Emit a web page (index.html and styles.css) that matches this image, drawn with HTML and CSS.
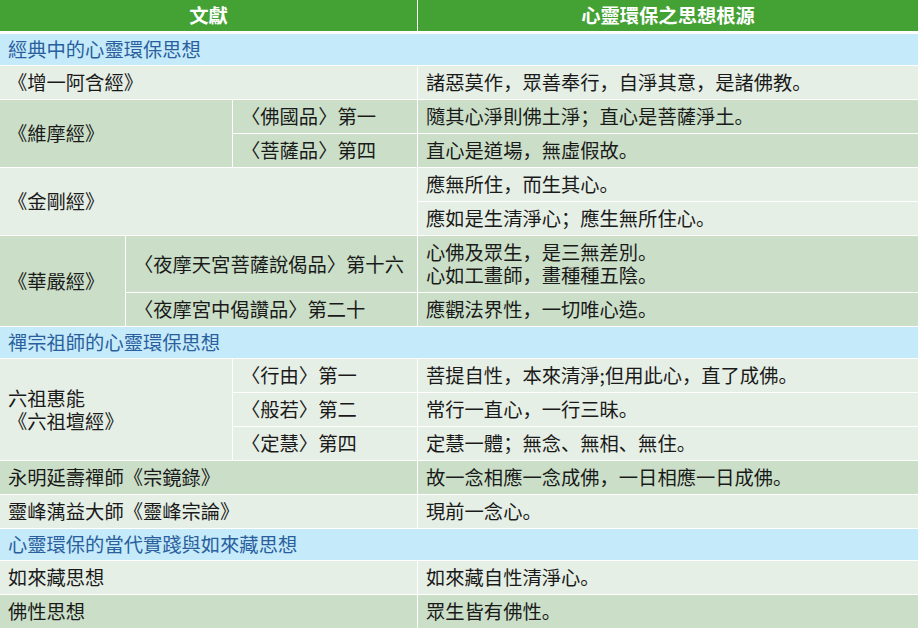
FILE: index.html
```html
<!DOCTYPE html>
<html lang="zh-Hant">
<head>
<meta charset="utf-8">
<title>心靈環保之思想根源</title>
<link rel="stylesheet" href="styles.css">
</head>
<body>
<table class="tbl">
  <colgroup>
    <col class="c1"><col class="c2"><col class="c3"><col class="c4">
  </colgroup>
  <thead>
    <tr class="head">
      <th colspan="3">文獻</th>
      <th class="last">心靈環保之思想根源</th>
    </tr>
  </thead>
  <tbody>
    <tr class="sec"><td colspan="4" class="last">經典中的心靈環保思想</td></tr>
    <tr class="lt"><td colspan="3">《增一阿含經》</td><td class="last">諸惡莫作<span class="pn" lang="zh-Hans">，</span>眾善奉行<span class="pn" lang="zh-Hans">，</span>自淨其意<span class="pn" lang="zh-Hans">，</span>是諸佛教<span class="pn" lang="zh-Hans">。</span></td></tr>
    <tr class="dk"><td colspan="2" rowspan="2">《維摩經》</td><td><span class="pn" lang="zh-Hans">〈</span>佛國品<span class="pn" lang="zh-Hans">〉</span>第一</td><td class="last">隨其心淨則佛土淨<span class="pn" lang="zh-Hans">；</span>直心是菩薩淨土<span class="pn" lang="zh-Hans">。</span></td></tr>
    <tr class="dk"><td><span class="pn" lang="zh-Hans">〈</span>菩薩品<span class="pn" lang="zh-Hans">〉</span>第四</td><td class="last">直心是道場<span class="pn" lang="zh-Hans">，</span>無虛假故<span class="pn" lang="zh-Hans">。</span></td></tr>
    <tr class="lt"><td colspan="3" rowspan="2">《金剛經》</td><td class="last">應無所住<span class="pn" lang="zh-Hans">，</span>而生其心<span class="pn" lang="zh-Hans">。</span></td></tr>
    <tr class="lt"><td class="last">應如是生清淨心<span class="pn" lang="zh-Hans">；</span>應生無所住心<span class="pn" lang="zh-Hans">。</span></td></tr>
    <tr class="dk"><td rowspan="2">《華嚴經》</td><td colspan="2"><span class="pn" lang="zh-Hans">〈</span>夜摩天宮菩薩說偈品<span class="pn" lang="zh-Hans">〉</span>第十六</td><td class="last">心佛及眾生<span class="pn" lang="zh-Hans">，</span>是三無差別<span class="pn" lang="zh-Hans">。</span><br>心如工畫師<span class="pn" lang="zh-Hans">，</span>畫種種五陰<span class="pn" lang="zh-Hans">。</span></td></tr>
    <tr class="dk"><td colspan="2"><span class="pn" lang="zh-Hans">〈</span>夜摩宮中偈讚品<span class="pn" lang="zh-Hans">〉</span>第二十</td><td class="last">應觀法界性<span class="pn" lang="zh-Hans">，</span>一切唯心造<span class="pn" lang="zh-Hans">。</span></td></tr>
    <tr class="sec"><td colspan="4" class="last">禪宗祖師的心靈環保思想</td></tr>
    <tr class="lt"><td colspan="2" rowspan="3">六祖惠能<br>《六祖壇經》</td><td><span class="pn" lang="zh-Hans">〈</span>行由<span class="pn" lang="zh-Hans">〉</span>第一</td><td class="last">菩提自性<span class="pn" lang="zh-Hans">，</span>本來清淨;但用此心<span class="pn" lang="zh-Hans">，</span>直了成佛<span class="pn" lang="zh-Hans">。</span></td></tr>
    <tr class="lt"><td><span class="pn" lang="zh-Hans">〈</span>般若<span class="pn" lang="zh-Hans">〉</span>第二</td><td class="last">常行一直心<span class="pn" lang="zh-Hans">，</span>一行三昧<span class="pn" lang="zh-Hans">。</span></td></tr>
    <tr class="lt"><td><span class="pn" lang="zh-Hans">〈</span>定慧<span class="pn" lang="zh-Hans">〉</span>第四</td><td class="last">定慧一體<span class="pn" lang="zh-Hans">；</span>無念<span class="pn" lang="zh-Hans">、</span>無相<span class="pn" lang="zh-Hans">、</span>無住<span class="pn" lang="zh-Hans">。</span></td></tr>
    <tr class="dk"><td colspan="3">永明延壽禪師《宗鏡錄》</td><td class="last">故一念相應一念成佛<span class="pn" lang="zh-Hans">，</span>一日相應一日成佛<span class="pn" lang="zh-Hans">。</span></td></tr>
    <tr class="lt"><td colspan="3">靈峰蕅益大師《靈峰宗論》</td><td class="last">現前一念心<span class="pn" lang="zh-Hans">。</span></td></tr>
    <tr class="sec"><td colspan="4" class="last">心靈環保的當代實踐與如來藏思想</td></tr>
    <tr class="lt"><td colspan="3">如來藏思想</td><td class="last">如來藏自性清淨心<span class="pn" lang="zh-Hans">。</span></td></tr>
    <tr class="dk"><td colspan="3">佛性思想</td><td class="last">眾生皆有佛性<span class="pn" lang="zh-Hans">。</span></td></tr>
  </tbody>
</table>
</body>
</html>
```
FILE: styles.css
```css
html, body {
  margin: 0;
  padding: 0;
  background: #ffffff;
}
body {
  font-family: "Noto Sans CJK TC", "Noto Sans CJK SC", sans-serif;
  font-size: 19.3px;
  color: #1a1a1a;
  text-spacing-trim: space-all;
}
.pn {
  font-family: "Noto Sans CJK SC", "Noto Sans CJK TC", sans-serif;
}
.tbl {
  width: 918px;
  table-layout: fixed;
  border-collapse: separate;
  border-spacing: 0;
}
.c1 { width: 126px; }
.c2 { width: 107px; }
.c3 { width: 185px; }
.c4 { width: 500px; }
.tbl th, .tbl td {
  padding: 5px 8px;
  line-height: 23px;
  text-align: left;
  vertical-align: middle;
  border-right: 1px solid #ffffff;
  border-bottom: 1px solid #ffffff;
  font-weight: normal;
  white-space: nowrap;
}
.tbl .last { border-right: none; }
.head th {
  background: #44a133;
  color: #ffffff;
  font-weight: bold;
  text-align: center;
  height: 31px;
  padding: 0 8px;
  line-height: 31px;
  border-bottom: 3px solid #ffffff;
  box-sizing: border-box;
}
.sec td {
  background: #c5eaf9;
  color: #2a5f9e;
  padding: 4px 8px;
}
.lt td { background: #e6efe5; }
.dk td { background: #cbdfc8; }
```
